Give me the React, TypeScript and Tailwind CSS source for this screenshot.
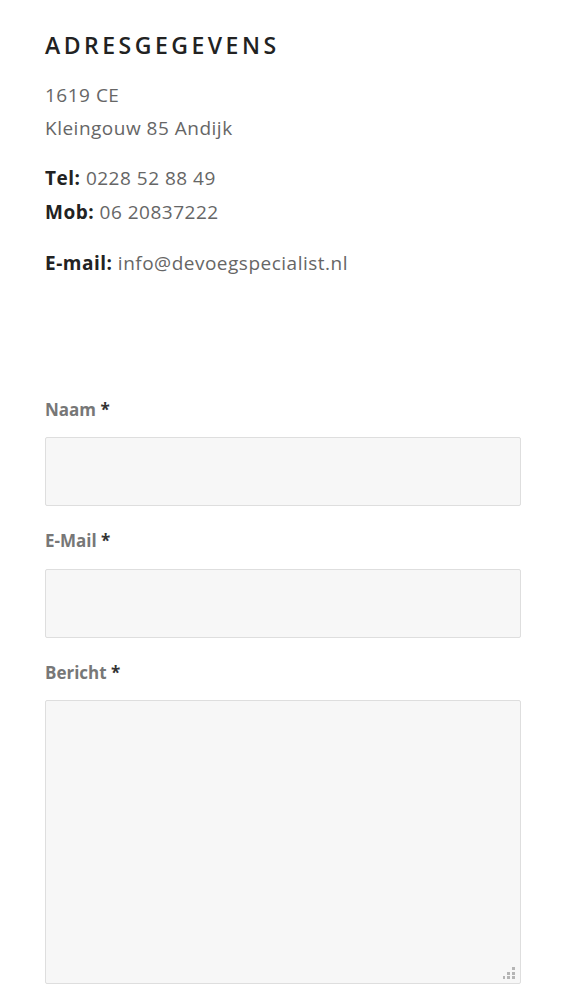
const labelCls = "block text-[17px] font-bold text-[#777] mb-[15px]";
const inputCls = "block w-full bg-[#f7f7f7] border border-[#dedede] rounded-[2px]";

function Grip() {
  return (
    <svg width="12" height="12" viewBox="0 0 12 12" className="absolute right-[6px] bottom-[5px]" fill="#b5b5b5">
      <rect x="9" y="0" width="3" height="3" />
      <rect x="4" y="5" width="3" height="3" />
      <rect x="9" y="5" width="3" height="3" />
      <rect x="-1" y="9" width="3" height="3" />
      <rect x="4" y="9" width="3" height="3" />
      <rect x="9" y="9" width="3" height="3" />
    </svg>
  );
}

function Field({ label, tall }: { label: string; tall?: boolean }) {
  return (
    <div className="mb-[22px]">
      <label className={labelCls}>
        {label} <span className="text-[#333]">*</span>
      </label>
      {tall ? (
        <div className="relative mt-[14px]">
          <textarea className={inputCls + " h-[284px] resize-none"} />
          <Grip />
        </div>
      ) : (
        <input type="text" className={inputCls + " h-[69px]"} />
      )}
    </div>
  );
}

export default function App() {
  return (
    <div className="min-h-screen bg-white px-[45px] pt-[28px] font-['Open_Sans',sans-serif] text-[#666]">
      <h3 className="text-[23px] font-semibold tracking-[3.5px] text-[#222] mb-[16px]">ADRESGEGEVENS</h3>

      <p className="text-[19px] tracking-[0.5px] leading-[33px] mt-[2px]">
        1619 CE
        <br />
        Kleingouw 85 Andijk
      </p>

      <p className="text-[19px] tracking-[0.5px] leading-[34px] mt-[16px]">
        <strong className="text-[#222]">Tel:</strong> 0228 52 88 49
        <br />
        <strong className="text-[#222]">Mob:</strong> 06 20837222
      </p>

      <p className="text-[19px] tracking-[0.5px] leading-[34px] mt-[17px]">
        <strong className="text-[#222]">E-mail:</strong> info@devoegspecialist.nl
      </p>

      <form className="mt-[117px] w-[476px]">
        <Field label="Naam" />
        <Field label="E-Mail" />
        <Field label="Bericht" tall />
      </form>
    </div>
  );
}
